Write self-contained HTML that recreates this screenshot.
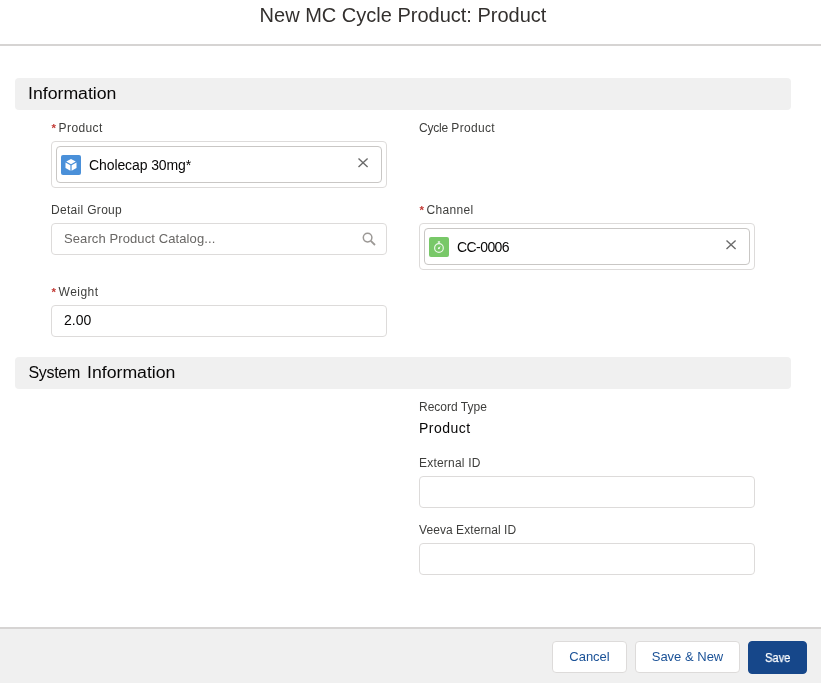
<!DOCTYPE html>
<html><head><meta charset="utf-8">
<style>
html,body{margin:0;padding:0;}
body{width:821px;height:683px;overflow:hidden;background:#fff;font-family:"Liberation Sans",sans-serif;color:#080707;position:relative;}
.abs{position:absolute;}
.title{left:0;width:806px;top:3px;text-align:center;font-size:20px;line-height:25px;color:#33302e;font-weight:400;}
.hline{left:0;top:44px;width:821px;height:2px;background:#d6d4d3;}
.sec{left:15px;width:776px;height:32px;background:#f0f0f0;border-radius:4px;}
.sec>span{position:absolute;left:13.4px;top:5px;font-size:16px;line-height:21px;color:#080707;}
.sx{display:inline-block;transform-origin:0 50%;transform:scaleX(1.105);}
.lbl{font-size:12px;line-height:16px;color:#3e3e3c;white-space:nowrap;}
.req{color:#c23934;font-weight:bold;font-size:11.5px;line-height:16px;display:inline-block;width:7.6px;text-indent:.6px;vertical-align:top;position:relative;top:.2px;}
.box{box-sizing:border-box;border:1px solid #dddbda;border-radius:4px;background:#fff;}
.pill{box-sizing:border-box;border:1px solid #c9c7c5;border-radius:4px;background:#fff;}
.val{font-size:14px;line-height:20px;color:#080707;white-space:nowrap;}
.ph{color:#696765;}
.foot{left:0;top:627px;width:821px;height:56px;background:#f0f0f0;border-top:2px solid #d6d4d3;box-sizing:border-box;}
.btn{box-sizing:border-box;height:32px;border:1px solid #dddbda;border-radius:4px;background:#fff;color:#1b5297;font-size:13px;line-height:30px;text-align:center;top:641px;}
.btn.brand{background:#16478a;border-color:#16478a;color:#fff;height:33px;font-size:12px;line-height:33px;-webkit-text-stroke:.25px #fff;}
.btn.brand span{display:inline-block;transform:scaleX(.92);}
#w{position:absolute;left:0;top:0;width:821px;height:683px;will-change:transform;}
</style></head><body><div id="w">
<div class="abs title">New MC Cycle Product: Product</div>
<div class="abs hline"></div>

<div class="abs sec" style="top:78px"><span class="sx">Information</span></div>

<div class="abs lbl" style="left:51px;top:120px"><span class="req">*</span><span style="letter-spacing:.4px">Product</span></div>
<div class="abs box" style="left:51px;top:141px;width:336px;height:47px"></div>
<div class="abs pill" style="left:56px;top:146px;width:326px;height:37px"></div>
<svg class="abs" style="left:61px;top:155px" width="20" height="20" viewBox="0 0 20 20"><rect width="20" height="20" rx="2" fill="#4a90d9"/><path d="M10 4 L14.8 6.6 L10 9.2 L5.2 6.6 Z M4.5 7.6 L9.4 10.3 L9.4 15.8 L4.5 13.1 Z M15.5 7.6 L15.5 13.1 L10.6 15.8 L10.6 10.3 Z" fill="#fff"/></svg>
<div class="abs val" style="left:89px;top:154.5px;letter-spacing:-.1px">Cholecap 30mg*</div>
<svg class="abs" style="left:357px;top:157.2px" width="12" height="12" viewBox="0 0 12 12"><path d="M1.5 1.6 L10.6 10 M10.6 1.6 L1.5 10" stroke="#6b6b6b" stroke-width="1.4" fill="none"/></svg>

<div class="abs lbl" style="left:419px;top:120px"><span style="letter-spacing:-.2px">Cycle</span> <span style="letter-spacing:.3px">Product</span></div>

<div class="abs lbl" style="left:51px;top:202px;letter-spacing:.31px">Detail Group</div>
<div class="abs box" style="left:51px;top:223px;width:336px;height:32px"></div>
<div class="abs val ph" style="left:64px;top:229px;font-size:13px;letter-spacing:.1px">Search Product Catalog...</div>
<svg class="abs" style="left:361px;top:231px" width="16" height="16" viewBox="0 0 16 16"><circle cx="6.6" cy="6.6" r="4.3" stroke="#9c9996" stroke-width="1.5" fill="none"/><path d="M9.8 9.8 L14 14" stroke="#9c9996" stroke-width="1.8"/></svg>

<div class="abs lbl" style="left:419px;top:202px"><span class="req">*</span><span style="letter-spacing:.3px">Channel</span></div>
<div class="abs box" style="left:419px;top:223px;width:336px;height:47px"></div>
<div class="abs pill" style="left:424px;top:228px;width:326px;height:37px"></div>
<svg class="abs" style="left:429px;top:237px" width="20" height="20" viewBox="0 0 20 20"><rect width="20" height="20" rx="2" fill="#78c868"/><circle cx="9.95" cy="11" r="4.35" stroke="#fff" stroke-opacity=".85" stroke-width="1.2" fill="none"/><path d="M8.8 4.9 H11.1 M9.95 4.9 V6.6" stroke="#fff" stroke-opacity=".85" stroke-width="1.2" fill="none"/><path d="M9 10.9 L11.9 9.1 L10.2 12 Z" fill="#fff" fill-opacity=".9"/><circle cx="9.8" cy="11.3" r=".9" fill="#fff" fill-opacity=".9"/></svg>
<div class="abs val" style="left:457px;top:236.5px;letter-spacing:-.57px">CC-0006</div>
<svg class="abs" style="left:725px;top:239.2px" width="12" height="12" viewBox="0 0 12 12"><path d="M1.5 1.6 L10.6 10 M10.6 1.6 L1.5 10" stroke="#6b6b6b" stroke-width="1.4" fill="none"/></svg>

<div class="abs lbl" style="left:51px;top:284px"><span class="req">*</span><span style="letter-spacing:.46px">Weight</span></div>
<div class="abs box" style="left:51px;top:305px;width:336px;height:32px"></div>
<div class="abs val" style="left:64px;top:310px">2.00</div>

<div class="abs sec" style="top:357px"><span><span style="letter-spacing:-.3px">System</span><span class="sx" style="margin-left:6.7px">Information</span></span></div>

<div class="abs lbl" style="left:419px;top:399px">Record Type</div>
<div class="abs val" style="left:419px;top:418px;letter-spacing:.48px">Product</div>

<div class="abs lbl" style="left:419px;top:455px;letter-spacing:.2px">External ID</div>
<div class="abs box" style="left:419px;top:476px;width:336px;height:32px"></div>

<div class="abs lbl" style="left:419px;top:522px;letter-spacing:.07px">Veeva External ID</div>
<div class="abs box" style="left:419px;top:543px;width:336px;height:32px"></div>

<div class="abs foot"></div>
<div class="abs btn" style="left:552px;width:75px">Cancel</div>
<div class="abs btn" style="left:635px;width:105px">Save &amp; New</div>
<div class="abs btn brand" style="left:748px;width:59px"><span>Save</span></div>
</div></body></html>
